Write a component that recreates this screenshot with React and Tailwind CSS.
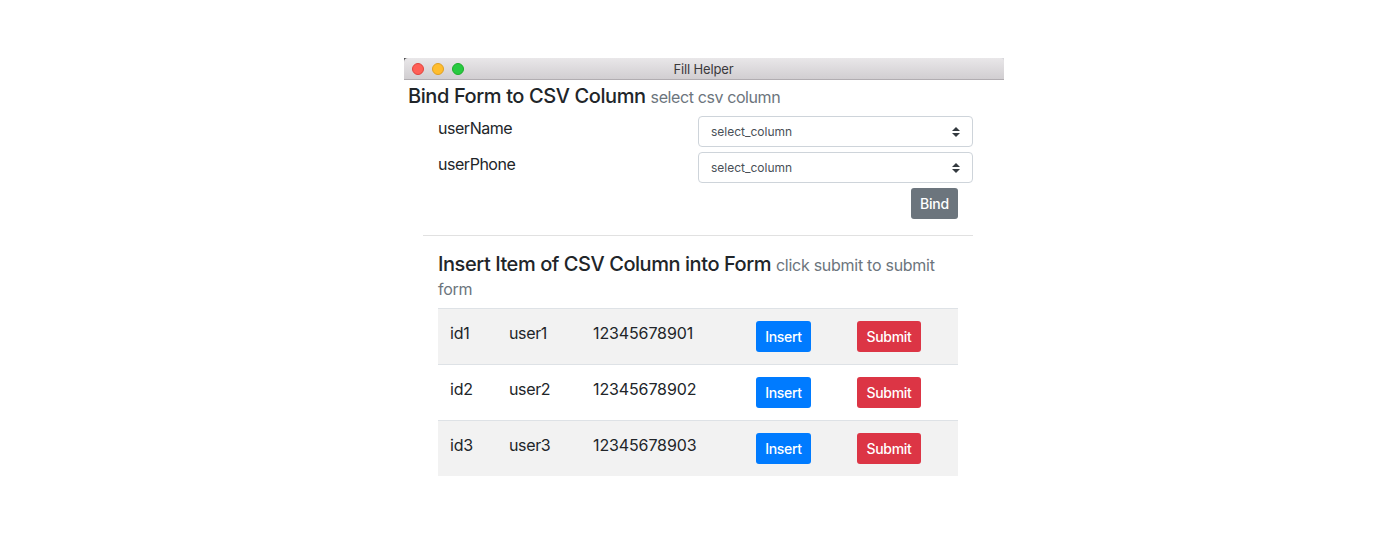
const rows = [
  { id: 'id1', user: 'user1', phone: '12345678901' },
  { id: 'id2', user: 'user2', phone: '12345678902' },
  { id: 'id3', user: 'user3', phone: '12345678903' },
];

function ColumnSelect() {
  return (
    <div className="flex h-[31px] w-[275px] items-center justify-between rounded-[4px] border border-[#ced4da] bg-white px-3 text-[12px] text-[#495057]">
      <span>select_column</span>
      <svg className="h-[10px] w-[8px]" viewBox="0 0 4 5">
        <path fill="#343a40" d="M2 0L0 2h4zm0 5L0 3h4z" />
      </svg>
    </div>
  );
}

function FieldRow({ label }) {
  return (
    <div className="flex h-9 items-start justify-between pl-[34px]">
      <span className="text-[16px] leading-6 tracking-[-0.47px]">{label}</span>
      <ColumnSelect />
    </div>
  );
}

export default function App() {
  return (
    <div className="flex h-[560px] w-[1400px] bg-white pt-[58px] pl-[404px] font-['Inter',sans-serif] text-[#212529]">
      <div className="flex w-[600px] flex-col">
        <div className="h-[22px] shrink-0 bg-linear-to-r from-[#4a4a4c] from-50% to-[#d8d8dc] to-50%">
          <div className="flex h-full items-center rounded-t-[4px] border-b border-[#b1adb1] bg-linear-to-b from-[#e9e7e9] to-[#d1ced1] pl-2">
            <div className="flex w-[52px] gap-2">
              <span className="size-3 rounded-full border border-[#e0443e] bg-[#ff5f57]" />
              <span className="size-3 rounded-full border border-[#dfa023] bg-[#ffbd2e]" />
              <span className="size-3 rounded-full border border-[#1dad2b] bg-[#28ca41]" />
            </div>
            <span className="flex-1 pr-[61px] text-center text-[13px] leading-4 tracking-[-0.15px] text-[#3b393b]">Fill Helper</span>
          </div>
        </div>
        <h5 className="h-9 pt-1 pl-1 text-[20px] leading-6 font-medium tracking-[-0.4px] whitespace-nowrap">
          Bind Form to CSV Column <small className="text-[16px] font-normal tracking-[-0.4px] text-[#6c757d]">select csv column</small>
        </h5>
        <div className="w-[569px]">
          <FieldRow label="userName" />
          <FieldRow label="userPhone" />
        </div>
        <div className="flex w-[554px] justify-end">
          <button className="h-[31px] w-[47px] rounded-[3px] bg-[#6c757d] text-[14px] font-medium tracking-[-0.25px] text-white">Bind</button>
        </div>
        <div className="mt-4 ml-[19px] h-px w-[550px] bg-[#e1e1e1]" />
        <h5 className="mt-4 ml-[34px] h-14 w-[520px] text-[20px] leading-6 font-medium tracking-[-0.44px]">
          Insert Item of CSV Column into Form{' '}
          <small className="text-[16px] font-normal tracking-[-0.27px] text-[#6c757d]">click submit to submit</small>
          <small className="block text-[16px] font-normal tracking-[-0.27px] text-[#6c757d]">form</small>
        </h5>
        <div className="ml-[34px] w-[520px]">
          {rows.map((row) => (
            <div key={row.id} className="flex h-14 border-t border-[#dee2e6] pt-3 pl-3 text-[16px] leading-6 odd:bg-[#f2f2f2]">
              <span className="w-[59px] tracking-[-0.2px]">{row.id}</span>
              <span className="w-[84px] tracking-[-0.35px]">{row.user}</span>
              <span className="w-[163px] tracking-[-0.12px]">{row.phone}</span>
              <span className="w-[101px]">
                <button className="block h-[31px] w-[55px] rounded-[3px] bg-[#007bff] text-[14px] font-medium tracking-[-0.3px] text-white">Insert</button>
              </span>
              <button className="h-[31px] w-[64px] rounded-[3px] bg-[#dc3545] text-[14px] font-medium tracking-[-0.3px] text-white">Submit</button>
            </div>
          ))}
        </div>
      </div>
    </div>
  );
}
